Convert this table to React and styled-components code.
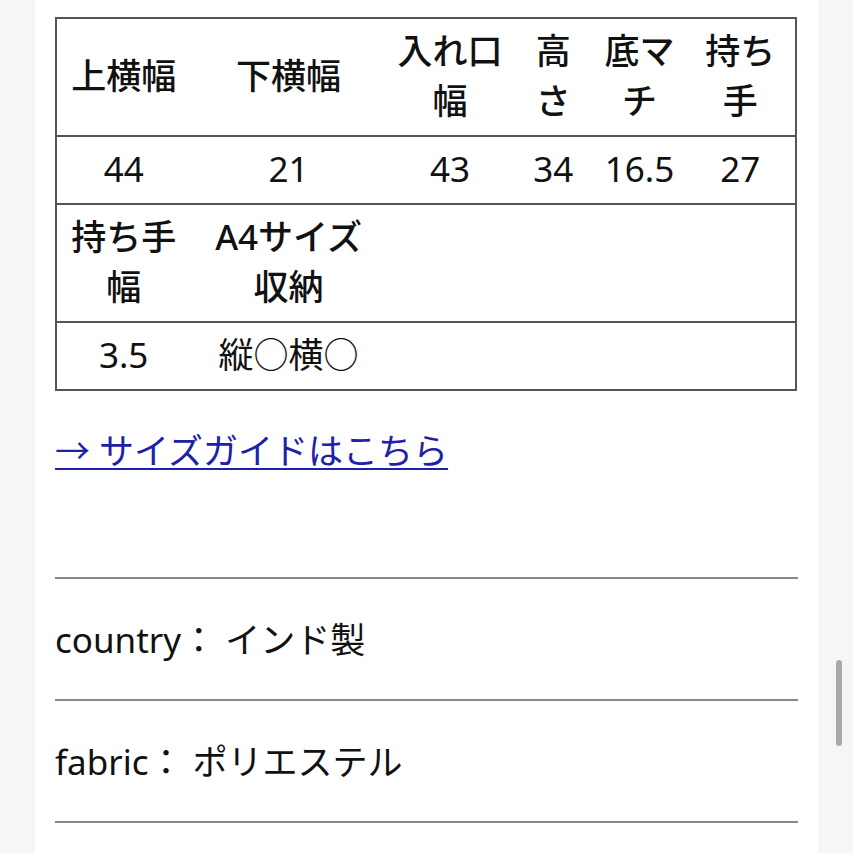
import React from 'react';
import styled, {createGlobalStyle} from 'styled-components';

const GlobalStyle = createGlobalStyle`
   html, body {
      margin: 0;
      padding: 0;
      background: #f6f6f6;
      font-family: "Noto Sans", "Noto Sans CJK JP", sans-serif;
      color: #111111;
   }
`;

const Page = styled.div`
   display: flex;
   height: 853px;
   overflow: hidden;
`;

const Card = styled.div`
   margin-left: 35px;
   width: 743px;
   padding: 17px 20px 0 20px;
   background: white;
`;

const Gutter = styled.div`
   flex: 1;
   display: flex;
   justify-content: center;
   padding-top: 660px;
`;

const ScrollThumb = styled.div`
   width: 6px;
   height: 86px;
   border-radius: 3px;
   background: #a9a9a9;
   margin-left: 7px;
`;

const SizeTable = styled.table`
   width: 742px;
   border-collapse: collapse;
   border: 2px solid #555555;
   table-layout: fixed;
   font-size: 35px;
   line-height: 50px;
`;

const Row = styled.tr`
   border-bottom: 2px solid #555555;
`;

const HeadCell = styled.th`
   font-weight: 500;
   text-align: center;
   vertical-align: middle;
   padding: 7px 8px 9px 8px;
`;

const DataCell = styled.td`
   font-weight: 400;
   text-align: center;
   vertical-align: middle;
   padding: 7px 8px 9px 8px;
`;

const Word = styled.span`
   white-space: nowrap;
`;

const GuideLink = styled.a`
   display: block;
   margin-top: 35px;
   font-size: 35px;
   line-height: 50px;
   color: #2020a8;
   text-decoration: underline;
   text-underline-offset: 4px;
   text-decoration-thickness: 2px;
`;

const SpecList = styled.div`
   margin-top: 101px;
   border-top: 2px solid #888888;
`;

const SpecRow = styled.div`
   display: flex;
   align-items: center;
   height: 122px;
   box-sizing: border-box;
   padding-bottom: 4px;
   border-bottom: 2px solid #888888;
   font-size: 35px;
`;

const COL_WIDTHS = [134, 196, 126, 80, 92, 110];

const HEAD_1 = ['上横幅', '下横幅', '入れ口幅', '高さ', '底マチ', '持ち手'];
const DATA_1 = ['44', '21', '43', '34', '16.5', '27'];
const HEAD_2 = ['持ち手幅', <>A4サイズ<Word>収納</Word></>, '', '', '', ''];
const DATA_2 = ['3.5', '縦○横○', '', '', '', ''];

const SPECS = [
   ['country', 'インド製'],
   ['fabric', 'ポリエステル'],
];

export default function App() {
   return (
      <Page>
         <GlobalStyle/>
         <Card>
            <SizeTable>
               <colgroup>
                  {COL_WIDTHS.map((w, i) => <col key={i} style={{width: w}}/>)}
               </colgroup>
               <tbody>
                  <Row>{HEAD_1.map((t, i) => <HeadCell key={i}>{t}</HeadCell>)}</Row>
                  <Row>{DATA_1.map((t, i) => <DataCell key={i}>{t}</DataCell>)}</Row>
                  <Row>{HEAD_2.map((t, i) => <HeadCell key={i}>{t}</HeadCell>)}</Row>
                  <Row>{DATA_2.map((t, i) => <DataCell key={i}>{t}</DataCell>)}</Row>
               </tbody>
            </SizeTable>
            <GuideLink href="#">→ サイズガイドはこちら</GuideLink>
            <SpecList>
               {SPECS.map(([label, value]) => (
                  <SpecRow key={label}>{label}： {value}</SpecRow>
               ))}
            </SpecList>
         </Card>
         <Gutter>
            <ScrollThumb/>
         </Gutter>
      </Page>
   );
}
